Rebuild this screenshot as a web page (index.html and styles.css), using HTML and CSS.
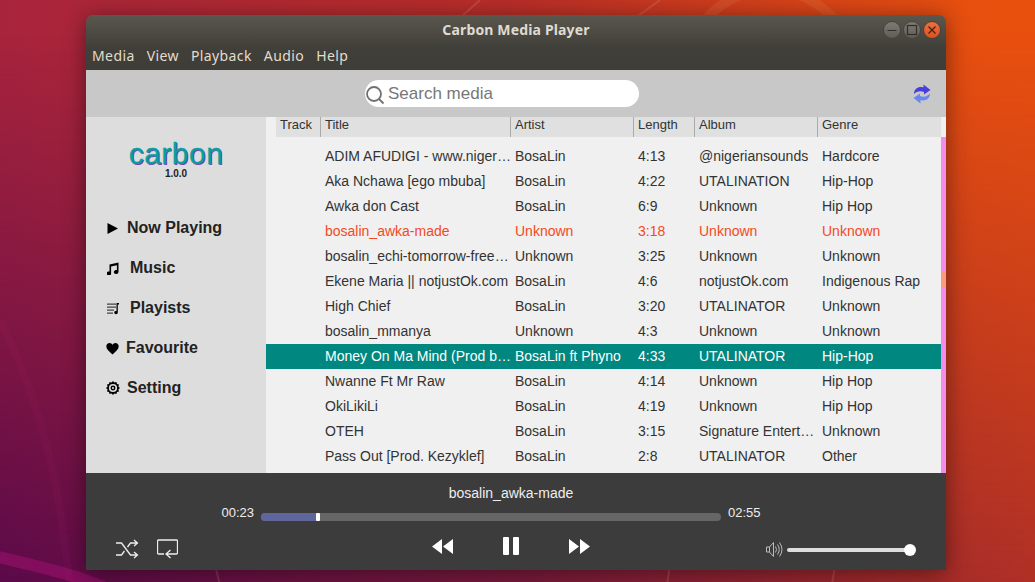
FILE: index.html
```html
<!DOCTYPE html>
<html lang="en">
<head>
  <meta charset="UTF-8" />
  <title>Carbon Media Player</title>
  <link rel="stylesheet" href="styles.css">
</head>
<body>

  <svg class="wallpaper" width="1035" height="582" viewBox="0 0 1035 582" fill="none">
    <circle cx="770" cy="75" r="85" stroke="#f0a060" stroke-opacity=".14" stroke-width="10"/>
    <path d="M-10 555C30 565 70 572 110 590" stroke="#a01070" stroke-opacity=".55" stroke-width="12"/>
    <path d="M0 320C40 400 60 480 70 590" stroke="#c03070" stroke-opacity=".07" stroke-width="8"/>
    <path d="M215 565l5 20M670 565l-3 20M835 565l-3 20M480 0l-18 16M660 0l-22 16" stroke="#f0a0a0" stroke-opacity=".2" stroke-width="2"/>
  </svg>

  <div id="window">
    <header id="titlebar">
      <div class="title">Carbon Media Player</div>
      <div class="win-buttons">
        <span class="win-btn">
          <svg width="12" height="12" viewBox="0 0 12 12"><path d="M1.500 6.500h9" stroke="#2f2e2a" stroke-width="1.200"/></svg>
        </span>
        <span class="win-btn">
          <svg width="12" height="12" viewBox="0 0 12 12"><rect x="1.500" y="1.500" width="9" height="9" fill="none" stroke="#2f2e2a" stroke-width="1.200"/></svg>
        </span>
        <span class="win-btn close">
          <svg width="12" height="12" viewBox="0 0 12 12"><path d="M2.500 2.500l7 7M9.500 2.500l-7 7" stroke="#3a2418" stroke-width="1.200"/></svg>
        </span>
      </div>
      <nav class="menu">
        <span>Media</span><span>View</span><span>Playback</span><span>Audio</span><span>Help</span>
      </nav>
    </header>

    <div id="toolbar">
      <div class="search">
        <svg width="20" height="20" viewBox="0 0 20 20"><circle cx="9" cy="9" r="7" fill="none" stroke="#707070" stroke-width="1.800"/><path d="M14 14l4.500 4.500" stroke="#707070" stroke-width="1.800"/></svg>
        <span>Search media</span>
      </div>
      <svg class="refresh" width="18" height="20" viewBox="0 0 18 20">
        <path d="M1 10C1 4.500 6 2 10.500 3.500V.5l7 5.500-6.500 4.500V8C7 6.500 3.500 7.500 1 10z" fill="#4a3fdc"/>
        <path d="M17 9.500c0 5.500-5 8-9.500 6.500v3.500l-7-5.500 6.500-4.500V12c4 1.500 7.500.5 10-2.500z" fill="#6a86f0"/>
      </svg>
    </div>

    <div id="content">
      <aside id="sidebar">
        <div class="logo">carbon</div>
        <div class="version">1.0.0</div>
        <ul class="nav">
          <li>
            <svg width="11" height="11" viewBox="0 0 11 11"><path d="M.5 0l10.500 5.500L.5 11z"/></svg>
            Now Playing
          </li>
          <li class="wide">
            <svg width="12" height="13" viewBox="0 0 12 13"><path d="M2.500 2.500L11.500.5v9.500a2.300 2 0 1 1-1.600-1.900V3.300L4.100 4.500v7a2.300 2 0 1 1-1.600-1.900z"/></svg>
            Music
          </li>
          <li class="wide">
            <svg width="12" height="13" viewBox="0 0 12 13"><path d="M0 1.500h9v1.200H0zM0 4.500h9v1.200H0zM0 7.500h7v1.200H0zM0 10.500h6v1.200H0z" fill="#444"/><path d="M9.500 1H12v1.500h-1.200v8a1.800 1.600 0 1 1-1.300-1.500z"/></svg>
            Playists
          </li>
          <li class="narrow">
            <svg width="13" height="13" viewBox="0 0 13 12"><path d="M6.500 12C3 9 .3 6.800.3 3.800.3 1.800 1.800.5 3.500.5c1.300 0 2.400.7 3 1.900C7.100 1.200 8.200.5 9.500.5c1.700 0 3.200 1.300 3.200 3.300 0 3-2.700 5.200-6.200 8.200z"/></svg>
            Favourite
          </li>
          <li class="narrow">
            <svg width="14" height="14" viewBox="0 0 13 13"><path d="M6.500 0l1.300 1.500 1.900-.6.500 1.900 1.900.5-.6 1.900L13 6.500l-1.500 1.300.6 1.900-1.900.5-.5 1.900-1.900-.6L6.500 13l-1.300-1.500-1.900.6-.5-1.900-1.900-.5.6-1.900L0 6.500l1.500-1.300-.6-1.900 1.900-.5.5-1.900 1.900.6z"/><circle cx="6.500" cy="6.500" r="3.800" fill="#ddd"/><circle cx="6.500" cy="6.500" r="2.300"/><circle cx="6.500" cy="6.500" r="1" fill="#ddd"/></svg>
            Setting
          </li>
        </ul>
      </aside>

      <section id="library">
        <div class="thead">
          <span>Track</span><span>Title</span><span>Artist</span><span>Length</span><span>Album</span><span>Genre</span>
        </div>
        <div class="list">
          <div class="tbody">
            <div class="row"><span></span><span>ADIM AFUDIGI - www.nigeriansounds.com</span><span>BosaLin</span><span>4:13</span><span>@nigeriansounds</span><span>Hardcore</span></div>
            <div class="row"><span></span><span>Aka Nchawa [ego mbuba]</span><span>BosaLin</span><span>4:22</span><span>UTALINATION</span><span>Hip-Hop</span></div>
            <div class="row"><span></span><span>Awka don Cast</span><span>BosaLin</span><span>6:9</span><span>Unknown</span><span>Hip Hop</span></div>
            <div class="row playing"><span></span><span>bosalin_awka-made</span><span>Unknown</span><span>3:18</span><span>Unknown</span><span>Unknown</span></div>
            <div class="row"><span></span><span>bosalin_echi-tomorrow-freestyle</span><span>Unknown</span><span>3:25</span><span>Unknown</span><span>Unknown</span></div>
            <div class="row"><span></span><span>Ekene Maria || notjustOk.com</span><span>BosaLin</span><span>4:6</span><span>notjustOk.com</span><span>Indigenous Rap</span></div>
            <div class="row"><span></span><span>High Chief</span><span>BosaLin</span><span>3:20</span><span>UTALINATOR</span><span>Unknown</span></div>
            <div class="row"><span></span><span>bosalin_mmanya</span><span>Unknown</span><span>4:3</span><span>Unknown</span><span>Unknown</span></div>
            <div class="row selected"><span></span><span>Money On Ma Mind (Prod by Kezyklef)</span><span>BosaLin ft Phyno</span><span>4:33</span><span>UTALINATOR</span><span>Hip-Hop</span></div>
            <div class="row"><span></span><span>Nwanne Ft Mr Raw</span><span>BosaLin</span><span>4:14</span><span>Unknown</span><span>Hip Hop</span></div>
            <div class="row"><span></span><span>OkiLikiLi</span><span>BosaLin</span><span>4:19</span><span>Unknown</span><span>Hip Hop</span></div>
            <div class="row"><span></span><span>OTEH</span><span>BosaLin</span><span>3:15</span><span>Signature Entertainment</span><span>Unknown</span></div>
            <div class="row"><span></span><span>Pass Out [Prod. Kezyklef]</span><span>BosaLin</span><span>2:8</span><span>UTALINATOR</span><span>Other</span></div>
          </div>
          <div class="scrollbar"><div class="scroll-mark"></div></div>
        </div>
      </section>
    </div>

    <footer id="player">
      <div class="now">bosalin_awka-made</div>
      <div class="seek">
        <span>00:23</span>
        <div class="seek-bar">
          <div class="seek-fill"></div>
          <div class="seek-knob"></div>
        </div>
        <span>02:55</span>
      </div>
      <div class="controls">
        <div class="ctl-left">
          <svg width="23" height="20" viewBox="0 0 23 20" fill="none" stroke="#eee" stroke-width="1.300">
            <path d="M0 4h5.500l9 12H21M0 16h5.500l3-4M11.500 8l3-4H21M18 1l3.500 3L18 7M18 13l3.500 3-3.500 3"/>
          </svg>
          <svg width="21" height="20" viewBox="0 0 21 20" fill="none" stroke="#eee" stroke-width="1.300">
            <path d="M7 15H1.500a1 1 0 0 1-1-1V2a1 1 0 0 1 1-1h18a1 1 0 0 1 1 1v12a1 1 0 0 1-1 1H9.500M13.500 11l-4.500 4 4.500 4"/>
          </svg>
        </div>
        <div class="ctl-mid">
          <svg width="21" height="15" viewBox="0 0 21 15" fill="#fff"><path d="M10 0v15L0 7.500zM21 0v15L11 7.500z"/></svg>
          <svg width="16" height="18" viewBox="0 0 16 18" fill="#fff"><rect width="6" height="18" rx="1"/><rect x="10" width="6" height="18" rx="1"/></svg>
          <svg width="21" height="15" viewBox="0 0 21 15" fill="#fff"><path d="M0 0v15l10-7.500zM11 0v15l10-7.500z"/></svg>
        </div>
        <div class="ctl-right">
          <svg width="17" height="17" viewBox="0 0 17 17" fill="none" stroke="#bbb" stroke-width="1">
            <path d="M.5 6v5h3l4 4.500v-14l-4 4.500zM3.500 6v5M9.500 5.500q2 3 0 6M11.500 3.500q3.500 5 0 10M13.500 1.500q5 7 0 14"/>
          </svg>
          <div class="volume"><div class="volume-knob"></div></div>
        </div>
      </div>
    </footer>
  </div>

</body>
</html>
```

FILE: styles.css
```css
html, body {
  height: 100%;
}

body {
  margin: 0;
  box-sizing: border-box;
  padding: 15px 89px 12px 86px;
  overflow: hidden;
  position: relative;
  font-family: "Liberation Sans", Arial, sans-serif;
  background: linear-gradient(90deg, #5c0a4a 0%, #7a1a3c 50%, #b03026 100%);
}

/* top half of the wallpaper fades into the bottom one */
body::before {
  content: "";
  position: absolute;
  inset: 0;
  background: linear-gradient(90deg, #a8243c 0%, #b82e28 50%, #e8500e 95%);
  -webkit-mask-image: linear-gradient(#000 5%, transparent 100%);
  mask-image: linear-gradient(#000 5%, transparent 100%);
}

.wallpaper {
  position: absolute;
  top: 0;
  left: 0;
}

#window {
  height: 100%;
  position: relative;
  display: flex;
  flex-direction: column;
  border-radius: 7px 7px 0 0;
  overflow: hidden;
  box-shadow: 0 3px 22px rgba(0, 0, 0, .45);
}

/* title bar + menu */
#titlebar {
  height: 55px;
  flex: none;
  position: relative;
  background: linear-gradient(#5a574e, #403f39 60%, #3e3d37);
  color: #dfdbd2;
}

.title {
  text-align: center;
  padding-top: 6px;
  font-family: "Noto Sans", sans-serif;
  font-size: 14px;
  font-weight: 700;
  line-height: 18px;
  letter-spacing: .15px;
}

.win-buttons {
  position: absolute;
  top: 6px;
  right: 5px;
  display: flex;
  gap: 2px;
}

.win-btn {
  width: 18px;
  height: 18px;
  box-sizing: border-box;
  border-radius: 50%;
  border: 1px solid #45443e;
  background: linear-gradient(#7d7b73, #5e5c55);
  display: flex;
  align-items: center;
  justify-content: center;
}

.win-btn.close {
  background: linear-gradient(#f0703c, #dd4f22);
}

.menu {
  display: flex;
  gap: 12px;
  padding: 7px 0 0 6px;
  font-family: "Noto Sans", sans-serif;
  font-size: 14px;
  line-height: 20px;
  letter-spacing: .4px;
  color: #e4dccb;
}

/* search row */
#toolbar {
  height: 47px;
  flex: none;
  background-color: #c8c8c8;
  display: flex;
  align-items: center;
  padding: 0 15px 0 279px;
}

.search {
  width: 274px;
  height: 27px;
  box-sizing: border-box;
  background-color: #fff;
  border-radius: 14px;
  display: flex;
  align-items: center;
  gap: 3px;
  color: #777;
  font-size: 17px;
}

.search svg {
  margin-top: 3px;
}

.refresh {
  margin-left: auto;
}

/* sidebar + table */
#content {
  flex: 1;
  display: flex;
  min-height: 0;
}

#sidebar {
  width: 180px;
  flex: none;
  background-color: #ddd;
  color: #222;
}

.logo {
  margin-top: 19px;
  text-align: center;
  font-size: 30px;
  line-height: 36px;
  letter-spacing: .5px;
  color: #0a9f9a;
  -webkit-text-stroke: .3px #0a9f9a;
  text-shadow: 1px 1px 0 #8040b8;
}

.version {
  text-align: center;
  font-size: 10px;
  font-weight: 700;
  line-height: 10px;
  margin-top: -3px;
}

.nav {
  list-style: none;
  margin: 29px 0 0;
  padding: 0 0 0 21px;
}

.nav li {
  height: 40px;
  display: flex;
  align-items: center;
  gap: 9px;
  font-size: 16px;
  font-weight: 700;
}

.nav li.wide {
  gap: 11px;
}

.nav li.narrow {
  gap: 7px;
  margin-left: -1px;
}

#library {
  flex: 1;
  min-width: 0;
  display: flex;
  flex-direction: column;
  background-color: #f0f0f0;
}

.thead,
.row {
  display: grid;
  grid-template-columns: 45px 190px 123px 61px 123px 1fr;
}

.thead {
  margin: 0 5px 0 10px;
  height: 20px;
  flex: none;
  background-color: #e0e0e0;
  font-size: 13px;
  line-height: 15px;
  color: #333;
}

.thead span {
  padding-left: 4px;
  border-right: 1px solid #aaa;
  box-sizing: border-box;
}

.thead span:last-child {
  border-right: 0;
}

.list {
  flex: 1;
  display: flex;
  min-height: 0;
}

.tbody {
  flex: 1;
  min-width: 0;
  padding-top: 7px;
}

.row {
  height: 25px;
  padding-left: 10px;
  font-size: 14px;
  line-height: 25px;
  color: #333;
}

.row span {
  padding-left: 4px;
  white-space: nowrap;
  overflow: hidden;
  text-overflow: ellipsis;
}

.row.playing {
  color: #f44a22;
}

.row.selected {
  background-color: #008780;
  color: #fff;
}

.scrollbar {
  width: 5px;
  flex: none;
  background-color: #f48ceb;
  padding-top: 135px;
  box-sizing: border-box;
}

.scroll-mark {
  height: 16px;
  background-color: #fb9a80;
}

/* player */
#player {
  height: 97px;
  flex: none;
  background-color: #3c3c3c;
  color: #eee;
  display: flex;
  flex-direction: column;
}

.now {
  margin-top: 12px;
  padding-right: 10px;
  text-align: center;
  font-size: 14px;
  line-height: 16px;
}

.seek {
  display: flex;
  align-items: flex-start;
  justify-content: center;
  gap: 7px;
  margin-top: 4px;
  padding-right: 50px;
  font-size: 13px;
  line-height: 16px;
}

.seek-bar {
  width: 460px;
  height: 8px;
  margin-top: 8px;
  position: relative;
  background-color: #666;
  border-radius: 4px;
  overflow: hidden;
}

.seek-fill {
  width: 56px;
  height: 100%;
  background-color: #5f669c;
}

.seek-knob {
  position: absolute;
  top: 0;
  left: 55px;
  width: 4px;
  height: 8px;
  background-color: #fff;
  border-radius: 1px;
}

.controls {
  display: grid;
  grid-template-columns: 1fr auto 1fr;
  align-items: center;
  margin-top: 16px;
  padding: 0 30px;
}

.ctl-left {
  display: flex;
  align-items: center;
  gap: 18px;
  margin-top: 2px;
}

.ctl-mid {
  display: flex;
  align-items: center;
  gap: 50px;
  margin: -4px 10px 0 0;
}

.ctl-right {
  display: flex;
  align-items: center;
  justify-content: flex-end;
  gap: 4px;
  margin-top: 2px;
  padding-right: 6px;
}

.volume {
  width: 123px;
  height: 4px;
  margin-top: 2px;
  position: relative;
  background-color: #ddd;
  border-radius: 2px;
}

.volume-knob {
  position: absolute;
  top: -4px;
  right: -6px;
  width: 12px;
  height: 12px;
  background-color: #fff;
  border-radius: 50%;
}
```
